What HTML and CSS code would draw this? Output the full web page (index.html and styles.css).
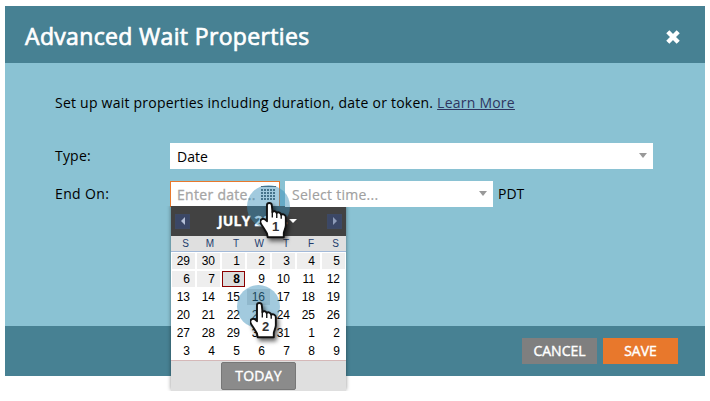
FILE: index.html
```html
<!DOCTYPE html>
<html lang="en">
<head>
<meta charset="utf-8">
<title>Advanced Wait Properties</title>
<link rel="stylesheet" href="styles.css">
</head>
<body>
<svg width="0" height="0" class="defs" aria-hidden="true">
  <symbol id="hand" viewBox="0 0 78 108">
    <path d="M20 9C20 1 33 1 34 9L36 30C39 25 46 26 48 32C53 28 60 31 61 37C68 34 75 38 75 45V68C75 76 70 84 69 90V103H22L20 92C15 84 11 76 5 68C-1 60 -1 53 5 50C10 47 15 50 20 56Z" fill="#fff" stroke="#111" stroke-width="5.5" stroke-linejoin="round"/>
    <path d="M35.5 27V45M48.5 31V47M61.5 36V49" fill="none" stroke="#111" stroke-width="4"/>
  </symbol>
</svg>
<main class="dialog">
  <header class="head">
    <h1>Advanced Wait Properties</h1>
    <svg class="close" viewBox="0 0 14 14"><path d="M1.8 1.8L12.2 12.2M12.2 1.8L1.8 12.2" stroke="#fff" stroke-width="4.4"/></svg>
  </header>
  <section class="body">
    <p class="intro"><span>Set up wait properties including duration, date or token.</span> <a>Learn More</a></p>
    <div class="row">
      <label>Type:</label>
      <div class="field type">Date<i class="arrow"></i></div>
    </div>
    <div class="row">
      <label class="end">End On:</label>
      <div class="field date"><span>Enter date..</span>
        <svg class="calicon" viewBox="0 0 15 15" shape-rendering="crispEdges"><path d="M0 .5H15" stroke="#4d5860"/><path d="M0 4H15M0 7H15M0 10H15M0 13H15" stroke="#4d5860" stroke-width="2" stroke-dasharray="2 1"/></svg>
        <div class="picker">
          <div class="month"><i class="nav prev"></i><b>JULY 2014</b><i class="down"></i><i class="nav next"></i></div>
          <div class="days"><span>S</span><span>M</span><span>T</span><span>W</span><span>T</span><span>F</span><span>S</span></div>
          <div class="grid">
            <span class="off">29</span><span class="off">30</span><span class="off">1</span><span class="off">2</span><span class="off">3</span><span class="off">4</span><span class="off">5</span>
            <span class="off">6</span><span class="off">7</span><span class="today">8</span><span>9</span><span>10</span><span>11</span><span>12</span>
            <span>13</span><span>14</span><span>15</span><span class="hover">16</span><span>17</span><span>18</span><span>19</span>
            <span>20</span><span>21</span><span>22</span><span>23</span><span>24</span><span>25</span><span>26</span>
            <span>27</span><span>28</span><span>29</span><span>30</span><span>31</span><span>1</span><span>2</span>
            <span>3</span><span>4</span><span>5</span><span>6</span><span>7</span><span>8</span><span>9</span>
          </div>
          <div class="foot"><button>TODAY</button></div>
        </div>
      </div>
      <div class="field time">Select time...<i class="arrow"></i></div>
      <span class="zone">PDT</span>
    </div>
  </section>
  <footer class="actions"><button class="cancel">CANCEL</button><button class="save">SAVE</button></footer>
</main>
<div class="pointer one"><svg><use href="#hand"/></svg><b>1</b></div>
<div class="pointer two"><svg><use href="#hand"/></svg><b>2</b></div>
</body>
</html>
```
FILE: styles.css
```css
* { box-sizing: border-box; }
body { margin: 0; padding: 6px 5px; background: #fff; color: #000; font: 14px/20px "Open Sans", sans-serif; position: relative; height: 401px; overflow: hidden; white-space: nowrap; }
.defs { position: absolute; }
button { border: 0; padding: 0; color: #fff; font: 14px/26px "Open Sans", sans-serif; -webkit-text-stroke: .4px #fff; }
.dialog { width: 700px; height: 370px; display: flex; flex-direction: column; background: #8ac2d3; }
.head { height: 57px; background: #478193; color: #fff; display: flex; justify-content: space-between; align-items: center; padding: 3px 25px 0 20px; }
h1 { margin: 0; font-size: 23px; line-height: 30px; font-weight: 400; letter-spacing: .34px; -webkit-text-stroke: .7px #fff; }
.close { width: 14px; height: 14px; margin-top: 2px; }
.body { flex: 1; padding: 30px 50px 0; }
.intro { margin: 0 0 30px; line-height: 20px; letter-spacing: .23px; }
.intro a { color: #2e3560; text-decoration: underline; }
.row { display: flex; height: 26px; margin-bottom: 12px; line-height: 26px; }
label { width: 115px; letter-spacing: .2px; }
.end { letter-spacing: .35px; }
.field { position: relative; height: 26px; background: #fff; padding: 1px 7px 0; }
.type { width: 483px; }
.date { width: 110px; border: 1px solid #e8782c; padding: 0 6px; color: #a5a5a5; letter-spacing: .3px; -webkit-text-stroke: .3px; }
.time { width: 208px; margin-left: 5px; color: #a0a0a0; letter-spacing: .27px; -webkit-text-stroke: .15px; }
.zone { margin-left: 5px; }
.arrow { position: absolute; right: 6px; top: 10px; border: 4.5px solid transparent; border-top: 5px solid #999; border-bottom: 0; }
.calicon { position: absolute; left: 90px; top: 4px; width: 15px; height: 15px; }
.picker { position: absolute; left: 0; top: 24px; width: 175px; height: 185px; background: #fff; color: #000; letter-spacing: 0; -webkit-text-stroke: 0; box-shadow: 0 -1px 4px rgba(0,0,0,.45); clip-path: inset(0 -5px 0 -5px); font: 12px/16px "Liberation Sans", Arial, sans-serif; }
.month { height: 30px; background: #424242; color: #fff; display: flex; align-items: center; padding: 0 4px; }
.month b { font: 700 14px/28px "Open Sans", sans-serif; letter-spacing: .2px; -webkit-text-stroke: .3px; margin-left: 28px; width: 71px; }
.down { border: 4px solid transparent; border-top-color: #fff; border-bottom: 0; }
.nav { width: 15px; height: 15px; background: #3b4766; border: 1px solid #3d4964; display: flex; align-items: center; justify-content: center; }
.nav::before { content: ""; border: 4px solid transparent; }
.prev::before { border-right-color: #b5c0d6; border-left: 0; }
.next { margin-left: auto; }
.next::before { border-left-color: #8d9bb8; border-right: 0; }
.days { height: 16px; background: #dfdfdf; border-bottom: 1px solid #a3bad9; color: #233d6d; display: grid; grid-template-columns: repeat(7, 25px); font-size: 10px; line-height: 16px; text-align: right; }
.days span { padding-right: 7px; }
.grid { display: grid; grid-template: repeat(6, 18px) / repeat(7, 25px); height: 108px; text-align: right; }
.grid span { margin: 1px; padding-right: 5px; line-height: 17px; }
.off { background: #eee; }
.grid .today { background: #ddd; border: 1px solid #8b0000; font-weight: 700; padding-right: 4px; line-height: 15px; }
.hover { background: #ddd; }
.foot { height: 31px; background: #dfdfdf; border-top: 1px solid #d5b8b8; padding-top: 1px; display: flex; justify-content: center; }
.foot button { width: 75px; height: 28px; background: #8b8b8b; border: 1px solid #777; border-radius: 2px; letter-spacing: .2px; }
.actions { height: 50px; background: #478193; display: flex; justify-content: flex-end; align-items: center; gap: 6px; padding-right: 27px; }
.actions button { width: 75px; height: 26px; }
.cancel { background: #7f7f7f; }
.save { background: #e8782c; }
.pointer { position: absolute; width: 43px; height: 43px; border-radius: 50%; background: rgba(60,145,185,.48); }
.one { left: 247px; top: 185px; }
.two { left: 237px; top: 285px; }
.pointer svg { position: absolute; left: 13px; top: 17px; width: 27px; height: 37px; overflow: visible; filter: drop-shadow(2px 3px 2px rgba(0,0,0,.6)); }
.pointer b { position: absolute; left: 24px; top: 36px; width: 9px; text-align: center; color: #333; font: 700 13px/12px "Liberation Sans", sans-serif; }
```
